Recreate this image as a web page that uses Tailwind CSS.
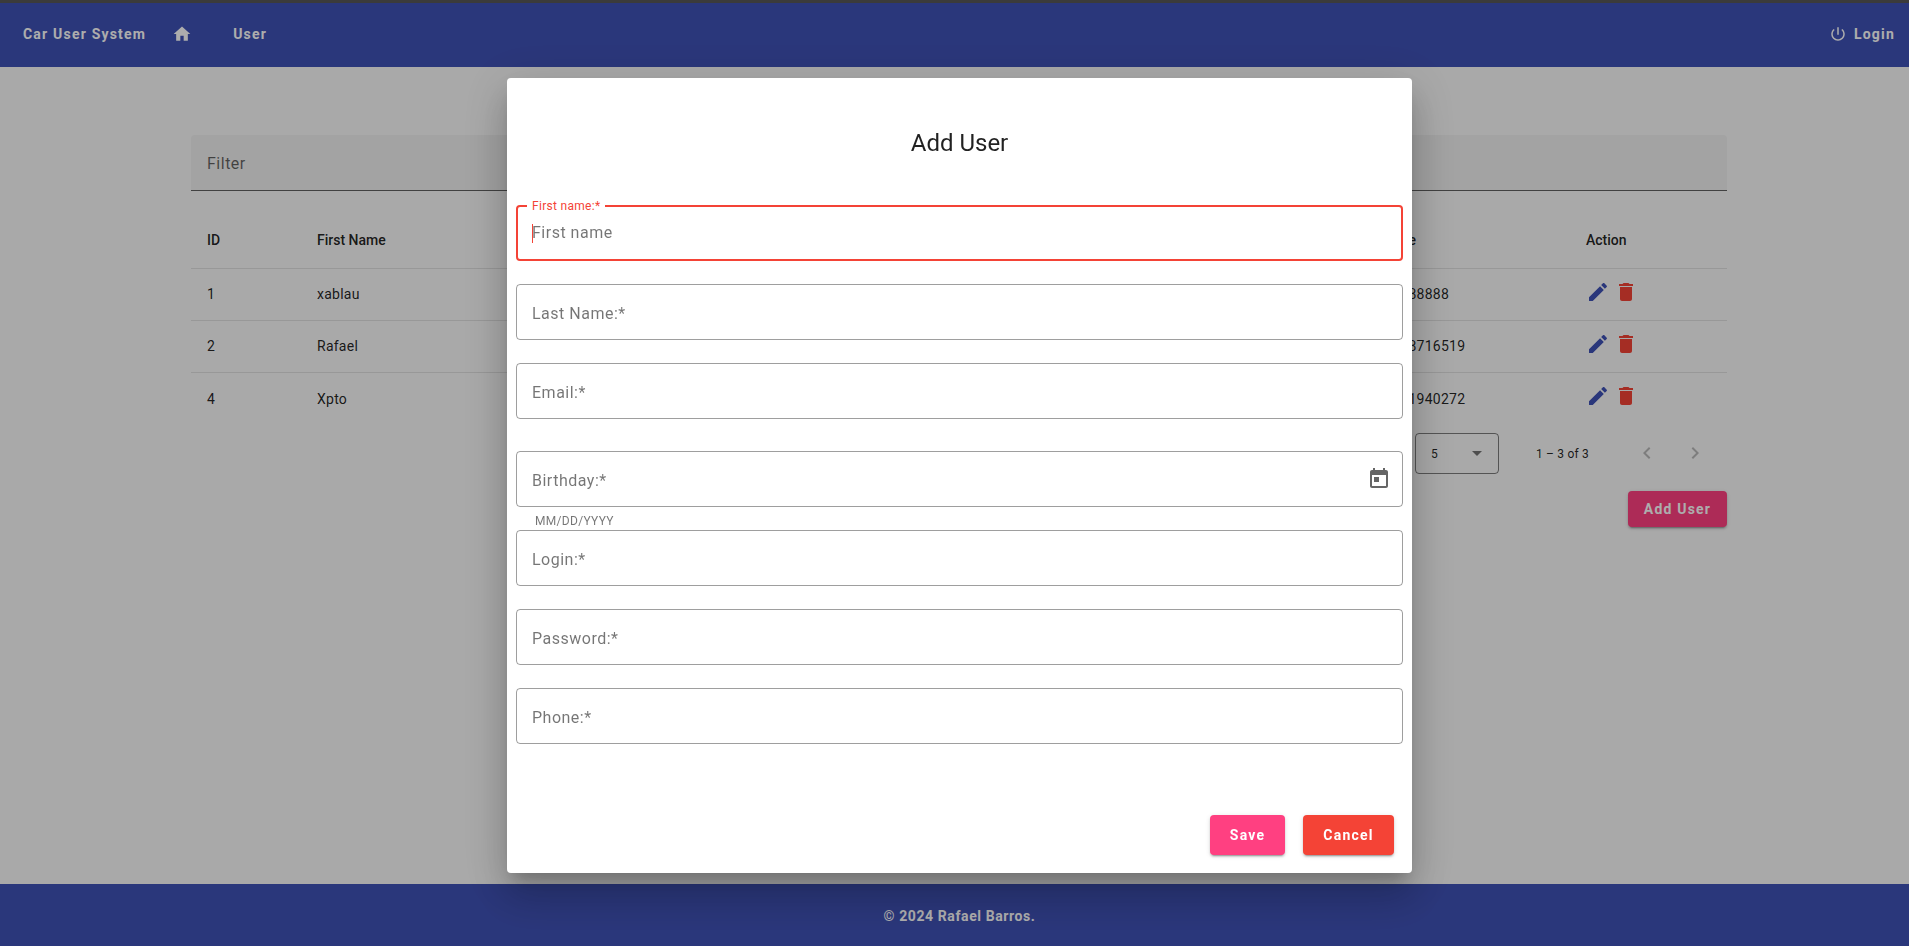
<!DOCTYPE html>
<html lang="en">
<head>
    <meta charset="UTF-8">
    <meta name="viewport" content="width=device-width, initial-scale=1.0">
    <title>Car User System</title>
    <script src="https://cdn.jsdelivr.net/npm/@tailwindcss/browser@4"></script>
</head>
<body class="h-[946px] overflow-hidden bg-[#fafafa] font-['Roboto',sans-serif] text-[rgba(0,0,0,0.87)]">
    <div class="flex h-[946px] flex-col">
        <!-- Navbar -->
        <header class="flex h-[67px] shrink-0 items-center border-t-[3px] border-[#575757] bg-[#3f51b5] pb-[2px] pl-[23px] pr-[14px] text-[14px] font-bold tracking-[1.2px] text-white">
            <span>Car User System</span>
            <svg class="ml-[26px] h-[20px] w-[20px] fill-white" viewBox="0 0 24 24"><path d="M10 20v-6h4v6h5v-8h3L12 3 2 12h3v8z"/></svg>
            <span class="ml-[41px]">User</span>
            <div class="ml-auto flex items-center gap-[7px]">
                <svg class="h-[18px] w-[18px] fill-white" viewBox="0 0 24 24"><path d="M13 3h-2v10h2V3zm4.83 2.17l-1.42 1.42C17.99 7.86 19 9.81 19 12c0 3.87-3.13 7-7 7s-7-3.13-7-7c0-2.19 1.01-4.14 2.58-5.42L6.17 5.17C4.23 6.82 3 9.26 3 12c0 4.97 4.03 9 9 9s9-4.03 9-9c0-2.74-1.23-5.18-3.17-6.83z"/></svg>
                <span>Login</span>
            </div>
        </header>

        <!-- Table page -->
        <main class="flex-1 pl-[191px] pr-[182px] pt-[68px]">
            <div class="flex h-[56px] items-center rounded-t-[4px] border-b border-[rgba(0,0,0,0.6)] bg-[#f0f0f0] px-[16px] pt-[2px] text-[16px] tracking-[0.5px] text-[rgba(0,0,0,0.6)]">Filter</div>

            <div class="grid h-[78px] grid-cols-[110px_1fr_210px_141px] items-center border-b border-[#e0e0e0] pl-[16px] pt-[22px] text-[14px] font-medium">
                <span>ID</span>
                <span>First Name</span>
                <span>Phone</span>
                <span>Action</span>
            </div>

            <div class="grid h-[52px] grid-cols-[110px_1fr_210px_141px] items-center border-b border-[#e0e0e0] pl-[16px] text-[14px] tracking-[0.25px]">
                <span>1</span>
                <span>xablau</span>
                <span>888888888</span>
                <div class="flex -translate-y-[3px] gap-[4px]">
                    <svg class="h-[24px] w-[24px] fill-[#3f51b5]" viewBox="0 0 24 24"><path d="M3 17.25V21h3.75L17.81 9.94l-3.75-3.75L3 17.25zM20.71 7.04c.39-.39.39-1.02 0-1.41l-2.34-2.34c-.39-.39-1.02-.39-1.41 0l-1.83 1.83 3.75 3.75 1.83-1.83z"/></svg>
                    <svg class="h-[24px] w-[24px] fill-[#f44336]" viewBox="0 0 24 24"><path d="M6 19c0 1.1.9 2 2 2h8c1.1 0 2-.9 2-2V7H6v12zM19 4h-3.5l-1-1h-5l-1 1H5v2h14V4z"/></svg>
                </div>
            </div>
            <div class="grid h-[52px] grid-cols-[110px_1fr_210px_141px] items-center border-b border-[#e0e0e0] pl-[16px] text-[14px] tracking-[0.25px]">
                <span>2</span>
                <span>Rafael</span>
                <span>81998716519</span>
                <div class="flex -translate-y-[3px] gap-[4px]">
                    <svg class="h-[24px] w-[24px] fill-[#3f51b5]" viewBox="0 0 24 24"><path d="M3 17.25V21h3.75L17.81 9.94l-3.75-3.75L3 17.25zM20.71 7.04c.39-.39.39-1.02 0-1.41l-2.34-2.34c-.39-.39-1.02-.39-1.41 0l-1.83 1.83 3.75 3.75 1.83-1.83z"/></svg>
                    <svg class="h-[24px] w-[24px] fill-[#f44336]" viewBox="0 0 24 24"><path d="M6 19c0 1.1.9 2 2 2h8c1.1 0 2-.9 2-2V7H6v12zM19 4h-3.5l-1-1h-5l-1 1H5v2h14V4z"/></svg>
                </div>
            </div>
            <div class="grid h-[52px] grid-cols-[110px_1fr_210px_141px] items-center pl-[16px] text-[14px] tracking-[0.25px]">
                <span>4</span>
                <span>Xpto</span>
                <span>81991940272</span>
                <div class="flex -translate-y-[3px] gap-[4px]">
                    <svg class="h-[24px] w-[24px] fill-[#3f51b5]" viewBox="0 0 24 24"><path d="M3 17.25V21h3.75L17.81 9.94l-3.75-3.75L3 17.25zM20.71 7.04c.39-.39.39-1.02 0-1.41l-2.34-2.34c-.39-.39-1.02-.39-1.41 0l-1.83 1.83 3.75 3.75 1.83-1.83z"/></svg>
                    <svg class="h-[24px] w-[24px] fill-[#f44336]" viewBox="0 0 24 24"><path d="M6 19c0 1.1.9 2 2 2h8c1.1 0 2-.9 2-2V7H6v12zM19 4h-3.5l-1-1h-5l-1 1H5v2h14V4z"/></svg>
                </div>
            </div>

            <!-- Paginator -->
            <div class="mt-[8px] flex h-[41px] items-center justify-end pr-[20px] text-[12px]">
                <div class="flex h-[41px] w-[84px] items-center justify-between rounded-[4px] border border-[rgba(0,0,0,0.5)] pl-[15px] pr-[16px]">
                    <span>5</span>
                    <span class="h-0 w-0 border-x-[5px] border-t-[5px] border-x-transparent border-t-[rgba(0,0,0,0.54)]"></span>
                </div>
                <span class="ml-[37px] tracking-[0.2px]">1 – 3 of 3</span>
                <div class="ml-[46px] flex w-[72px] -translate-y-[1px] justify-between">
                    <svg class="h-[24px] w-[24px] fill-[rgba(0,0,0,0.26)]" viewBox="0 0 24 24"><path d="M15.41 7.41L14 6l-6 6 6 6 1.41-1.41L10.83 12z"/></svg>
                    <svg class="h-[24px] w-[24px] fill-[rgba(0,0,0,0.26)]" viewBox="0 0 24 24"><path d="M10 6L8.59 7.41 13.17 12l-4.58 4.59L10 18l6-6z"/></svg>
                </div>
            </div>
            <div class="mt-[17px] flex justify-end">
                <button class="h-[36px] w-[99px] rounded-[4px] bg-[#ff4081] text-[14px] font-bold tracking-[1.2px] text-white shadow-[0_3px_1px_-2px_rgba(0,0,0,0.2),0_2px_2px_0_rgba(0,0,0,0.14),0_1px_5px_0_rgba(0,0,0,0.12)]">Add User</button>
            </div>
        </main>

        <footer class="flex h-[62px] shrink-0 items-center justify-center bg-[#3f51b5] pl-[10px] pt-[2px] text-[14px] font-bold tracking-[0.6px] text-white">© 2024 Rafael Barros.</footer>
    </div>

    <!-- Backdrop + dialog -->
    <div class="fixed inset-0 bg-black/[0.32]"></div>
    <div class="fixed left-[507px] top-[78px] h-[795px] w-[905px] rounded-[4px] bg-white px-[9px] shadow-[0_11px_15px_-7px_rgba(0,0,0,0.2),0_24px_38px_3px_rgba(0,0,0,0.14),0_9px_46px_8px_rgba(0,0,0,0.12)]">
        <h2 class="flex h-[127px] items-center justify-center pt-[2px] text-[24px] font-normal">Add User</h2>

        <div class="relative flex h-[56px] items-center rounded-[4px] border-2 border-[#f44336] pl-[14px] text-[16px] tracking-[0.5px] text-[rgba(0,0,0,0.54)]">
            <span class="absolute left-[9px] top-[-8px] bg-white px-[5px] text-[12px] leading-[14px] tracking-[0.3px] text-[#f44336]">First name:*</span>
            <span class="absolute left-[14px] top-[17px] h-[19px] w-px bg-[#f44336]"></span>
            First name
        </div>
        <div class="mt-[23px] flex h-[56px] items-center rounded-[4px] border border-[rgba(0,0,0,0.38)] pl-[15px] pt-[3px] text-[16px] tracking-[0.5px] text-[rgba(0,0,0,0.54)]">Last Name:*</div>
        <div class="mt-[23px] flex h-[56px] items-center rounded-[4px] border border-[rgba(0,0,0,0.38)] pl-[15px] pt-[3px] text-[16px] tracking-[0.5px] text-[rgba(0,0,0,0.54)]">Email:*</div>
        <div class="mt-[32px] flex h-[56px] items-center justify-between rounded-[4px] border border-[rgba(0,0,0,0.38)] pl-[15px] pr-[11px] text-[16px] tracking-[0.5px] text-[rgba(0,0,0,0.54)]">
            <span class="pt-[3px]">Birthday:*</span>
            <svg class="h-[24px] w-[24px] fill-[rgba(0,0,0,0.6)]" viewBox="0 0 24 24"><path d="M19 3h-1V1h-2v2H8V1H6v2H5c-1.11 0-1.99.9-1.99 2L3 19c0 1.1.89 2 2 2h14c1.1 0 2-.9 2-2V5c0-1.1-.9-2-2-2zm0 16H5V8h14v11zM7 10h5v5H7z"/></svg>
        </div>
        <div class="flex h-[23px] items-center pl-[19px] pt-[5px] text-[12px] tracking-[0.3px] text-[rgba(0,0,0,0.54)]">MM/DD/YYYY</div>
        <div class="flex h-[56px] items-center rounded-[4px] border border-[rgba(0,0,0,0.38)] pl-[15px] pt-[3px] text-[16px] tracking-[0.5px] text-[rgba(0,0,0,0.54)]">Login:*</div>
        <div class="mt-[23px] flex h-[56px] items-center rounded-[4px] border border-[rgba(0,0,0,0.38)] pl-[15px] pt-[3px] text-[16px] tracking-[0.5px] text-[rgba(0,0,0,0.54)]">Password:*</div>
        <div class="mt-[23px] flex h-[56px] items-center rounded-[4px] border border-[rgba(0,0,0,0.38)] pl-[15px] pt-[3px] text-[16px] tracking-[0.5px] text-[rgba(0,0,0,0.54)]">Phone:*</div>

        <div class="mt-[71px] flex justify-end gap-[18px] pr-[9px]">
            <button class="h-[40px] w-[75px] rounded-[4px] bg-[#ff4081] text-[14px] font-bold tracking-[1.2px] text-white shadow-[0_3px_1px_-2px_rgba(0,0,0,0.2),0_2px_2px_0_rgba(0,0,0,0.14),0_1px_5px_0_rgba(0,0,0,0.12)]">Save</button>
            <button class="h-[40px] w-[91px] rounded-[4px] bg-[#f44336] text-[14px] font-bold tracking-[1.2px] text-white shadow-[0_3px_1px_-2px_rgba(0,0,0,0.2),0_2px_2px_0_rgba(0,0,0,0.14),0_1px_5px_0_rgba(0,0,0,0.12)]">Cancel</button>
        </div>
    </div>
</body>
</html>
